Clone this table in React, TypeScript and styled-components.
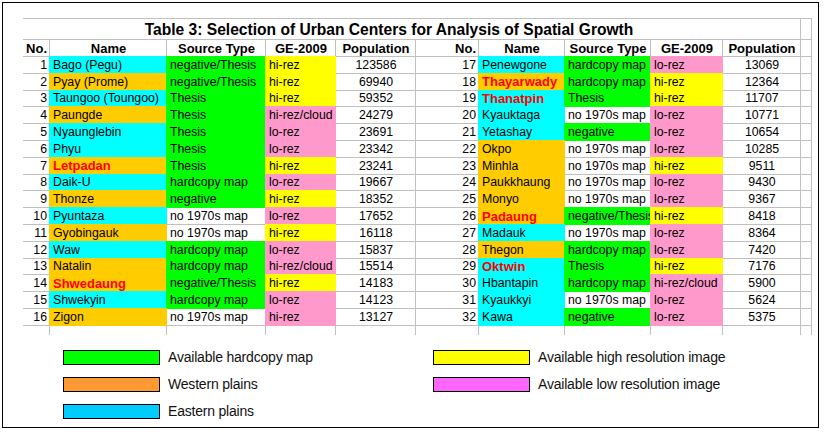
import React from "react";
import styled, { createGlobalStyle } from "styled-components";

const GRID = "#c0c0c0";
const CYAN = "#00ffff";
const GOLD = "#ffcc00";
const GREEN = "#00ff00";
const YELLOW = "#ffff00";
const PINK = "#ff99cc";

const GlobalStyle = createGlobalStyle`
  html, body { margin: 0; padding: 0; background: #fff; }
  body { font-family: "Liberation Sans", Arial, sans-serif; color: #000; }
`;

const Frame = styled.div`
  box-sizing: border-box;
  margin: 2px 0 0 2px;
  width: 817px;
  height: 426px;
  border: 1px solid #000;
  padding: 15px 0 0 20px;
  background: #fff;
  overflow: hidden;
`;

const Sheet = styled.div`
  display: grid;
  grid-template-columns: 27px 117px 99px 70px 80px 63px 86px 86px 72px 78px 11px;
  grid-template-rows: 22px 17px repeat(16, 16.8px) 9px;
`;

const TitleCell = styled.div`
  grid-column: 1 / 11;
  box-sizing: border-box;
  border-top: 1px solid ${GRID};
  border-bottom: 1px solid ${GRID};
  border-right: 1px solid ${GRID};
  display: flex;
  align-items: center;
  justify-content: center;
  padding: 1px 45px 0 0;
  font-size: 15.6px;
  font-weight: bold;
  white-space: nowrap;
`;

const EdgeCell = styled.div<{ $top?: boolean }>`
  box-sizing: border-box;
  border-top: ${(p) => (p.$top ? `1px solid ${GRID}` : "none")};
  border-bottom: 1px solid ${GRID};
  border-right: 1px solid ${GRID};
`;

const HeadCell = styled.div<{ $align?: "left" | "center" | "right" }>`
  box-sizing: border-box;
  border-right: 1px solid ${GRID};
  border-bottom: 1px solid ${GRID};
  display: flex;
  align-items: center;
  justify-content: ${(p) =>
    p.$align === "right" ? "flex-end" : p.$align === "left" ? "flex-start" : "center"};
  padding: 0 2px 0 3px;
  font-size: 13px;
  font-weight: bold;
  white-space: nowrap;
  overflow: hidden;
`;

const Cell = styled.div<{
  $fill?: string;
  $align?: "left" | "center" | "right";
  $red?: boolean;
}>`
  position: relative;
  box-sizing: border-box;
  background: ${(p) => p.$fill ?? "#fff"};
  border-right: 1px solid ${(p) => (p.$fill ? "transparent" : GRID)};
  border-bottom: 1px solid ${(p) => (p.$fill ? "transparent" : GRID)};
  margin: ${(p) => (p.$fill ? "-1px 0 0 -1px" : "0")};
  padding: ${(p) => (p.$fill ? "1px 2px 0 4px" : "0 2px 0 3px")};
  display: flex;
  align-items: center;
  justify-content: ${(p) =>
    p.$align === "right" ? "flex-end" : p.$align === "center" ? "center" : "flex-start"};
  font-size: ${(p) => (p.$red ? "13px" : "12.3px")};
  font-weight: ${(p) => (p.$red ? "bold" : "normal")};
  color: ${(p) => (p.$red ? "#ff0000" : "#000")};
  white-space: nowrap;
  overflow: hidden;
`;

const TailCell = styled.div`
  border-right: 1px solid ${GRID};
`;

const Legend = styled.div`
  display: grid;
  grid-template-columns: 370px auto;
  row-gap: 12px;
  padding: 15px 0 0 40px;
`;

const LegendItem = styled.div`
  display: flex;
  align-items: center;
  gap: 8px;
  height: 15px;
`;

const Swatch = styled.div<{ $color: string }>`
  box-sizing: border-box;
  width: 97px;
  height: 15px;
  border: 1px solid #000;
  background: ${(p) => p.$color};
`;

const LegendText = styled.span`
  font-size: 14px;
  letter-spacing: -0.2px;
  color: #111;
  white-space: nowrap;
`;

type Row = {
  no: number;
  name: string;
  region: "w" | "e";
  red?: boolean;
  src: string;
  ge: string;
  pop: number;
};

const SRC_FILL: Record<string, string | undefined> = {
  "negative/Thesis": GREEN,
  Thesis: GREEN,
  "hardcopy map": GREEN,
  negative: GREEN,
  "no 1970s map": undefined,
};

const left: Row[] = [
  { no: 1, name: "Bago (Pegu)", region: "e", src: "negative/Thesis", ge: "hi-rez", pop: 123586 },
  { no: 2, name: "Pyay (Prome)", region: "w", src: "negative/Thesis", ge: "hi-rez", pop: 69940 },
  { no: 3, name: "Taungoo (Toungoo)", region: "e", src: "Thesis", ge: "hi-rez", pop: 59352 },
  { no: 4, name: "Paungde", region: "w", src: "Thesis", ge: "hi-rez/cloud", pop: 24279 },
  { no: 5, name: "Nyaunglebin", region: "e", src: "Thesis", ge: "lo-rez", pop: 23691 },
  { no: 6, name: "Phyu", region: "e", src: "Thesis", ge: "lo-rez", pop: 23342 },
  { no: 7, name: "Letpadan", region: "w", red: true, src: "Thesis", ge: "hi-rez", pop: 23241 },
  { no: 8, name: "Daik-U", region: "e", src: "hardcopy map", ge: "lo-rez", pop: 19667 },
  { no: 9, name: "Thonze", region: "w", src: "negative", ge: "hi-rez", pop: 18352 },
  { no: 10, name: "Pyuntaza", region: "e", src: "no 1970s map", ge: "lo-rez", pop: 17652 },
  { no: 11, name: "Gyobingauk", region: "w", src: "no 1970s map", ge: "hi-rez", pop: 16118 },
  { no: 12, name: "Waw", region: "e", src: "hardcopy map", ge: "lo-rez", pop: 15837 },
  { no: 13, name: "Natalin", region: "w", src: "hardcopy map", ge: "hi-rez/cloud", pop: 15514 },
  { no: 14, name: "Shwedaung", region: "w", red: true, src: "negative/Thesis", ge: "hi-rez", pop: 14183 },
  { no: 15, name: "Shwekyin", region: "e", src: "hardcopy map", ge: "lo-rez", pop: 14123 },
  { no: 16, name: "Zigon", region: "w", src: "no 1970s map", ge: "hi-rez*", pop: 13127 },
];

const right: Row[] = [
  { no: 17, name: "Penewgone", region: "e", src: "hardcopy map", ge: "lo-rez", pop: 13069 },
  { no: 18, name: "Thayarwady", region: "w", red: true, src: "hardcopy map", ge: "hi-rez", pop: 12364 },
  { no: 19, name: "Thanatpin", region: "e", red: true, src: "Thesis", ge: "hi-rez", pop: 11707 },
  { no: 20, name: "Kyauktaga", region: "e", src: "no 1970s map", ge: "lo-rez", pop: 10771 },
  { no: 21, name: "Yetashay", region: "e", src: "negative", ge: "lo-rez", pop: 10654 },
  { no: 22, name: "Okpo", region: "w", src: "no 1970s map", ge: "lo-rez", pop: 10285 },
  { no: 23, name: "Minhla", region: "w", src: "no 1970s map", ge: "hi-rez", pop: 9511 },
  { no: 24, name: "Paukkhaung", region: "w", src: "no 1970s map", ge: "lo-rez", pop: 9430 },
  { no: 25, name: "Monyo", region: "w", src: "no 1970s map", ge: "lo-rez", pop: 9367 },
  { no: 26, name: "Padaung", region: "w", red: true, src: "negative/Thesis", ge: "hi-rez", pop: 8418 },
  { no: 27, name: "Madauk", region: "e", src: "no 1970s map", ge: "lo-rez", pop: 8364 },
  { no: 28, name: "Thegon", region: "w", src: "hardcopy map", ge: "lo-rez", pop: 7420 },
  { no: 29, name: "Oktwin", region: "e", red: true, src: "Thesis", ge: "hi-rez", pop: 7176 },
  { no: 30, name: "Hbantapin", region: "e", src: "hardcopy map", ge: "hi-rez/cloud", pop: 5900 },
  { no: 31, name: "Kyaukkyi", region: "e", src: "no 1970s map", ge: "lo-rez", pop: 5624 },
  { no: 32, name: "Kawa", region: "e", src: "negative", ge: "lo-rez", pop: 5375 },
];

// "hi-rez*" marks a hi-rez label shown on the low-resolution (pink) fill
const geFill = (ge: string) => (ge === "hi-rez" ? YELLOW : PINK);
const geText = (ge: string) => ge.replace("*", "");

const Half = ({ r }: { r: Row }) => (
  <>
    <Cell $align="right">{r.no}</Cell>
    <Cell $fill={r.region === "e" ? CYAN : GOLD} $red={r.red}>
      {r.name}
    </Cell>
    <Cell $fill={SRC_FILL[r.src]}>{r.src}</Cell>
    <Cell $fill={geFill(r.ge)}>{geText(r.ge)}</Cell>
    <Cell $align="center">{r.pop}</Cell>
  </>
);

const headers = (
  <>
    <HeadCell $align="right">No.</HeadCell>
    <HeadCell>Name</HeadCell>
    <HeadCell>Source Type</HeadCell>
    <HeadCell>GE-2009</HeadCell>
    <HeadCell>Population</HeadCell>
  </>
);

const legendItems: { color: string; label: string }[] = [
  { color: "#00ff00", label: "Available hardcopy map" },
  { color: "#ffff00", label: "Available high resolution image" },
  { color: "#ff9933", label: "Western plains" },
  { color: "#ff66ff", label: "Available low resolution image" },
  { color: "#00ccff", label: "Eastern plains" },
];

export default function App() {
  return (
    <>
      <GlobalStyle />
      <Frame>
        <Sheet>
          <TitleCell>Table 3: Selection of Urban Centers for Analysis of Spatial Growth</TitleCell>
          <EdgeCell $top />
          {headers}
          {headers}
          <EdgeCell />
          {left.map((r, i) => (
            <React.Fragment key={r.no}>
              <Half r={r} />
              <Half r={right[i]} />
              <EdgeCell />
            </React.Fragment>
          ))}
          {Array.from({ length: 11 }).map((_, i) => (
            <TailCell key={i} />
          ))}
        </Sheet>
        <Legend>
          {legendItems.map((it) => (
            <LegendItem key={it.label}>
              <Swatch $color={it.color} />
              <LegendText>{it.label}</LegendText>
            </LegendItem>
          ))}
        </Legend>
      </Frame>
    </>
  );
}
